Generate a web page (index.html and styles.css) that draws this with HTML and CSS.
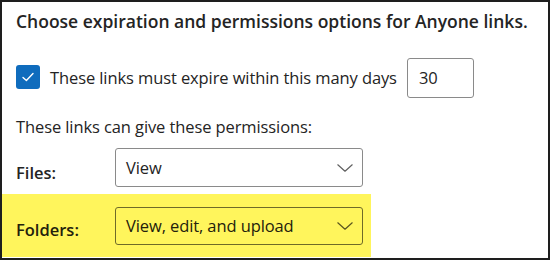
FILE: index.html
```html
<!DOCTYPE html>
<html lang="en">
<head>
<meta charset="utf-8">
<link rel="stylesheet" href="styles.css">
</head>
<body>
<div class="panel">
  <h1 class="title">Choose expiration and permissions options for Anyone links.</h1>
  <div class="expire-row">
    <span class="checkbox">
      <svg width="14" height="14" viewBox="0 0 14 14"><path d="M2 7.4 L5.4 10.6 L12 3.6" fill="none" stroke="#fff" stroke-width="1.4" stroke-linecap="round" stroke-linejoin="round"/></svg>
    </span>
    <span class="expire-text">These links must expire within this many days</span>
    <span class="days-input">30</span>
  </div>
  <p class="perm">These links can give these permissions:</p>
  <div class="field-row">
    <span class="field-label">Files:</span>
    <div class="dropdown">
      <span class="dropdown-value">View</span>
      <svg class="chevron" width="16" height="8" viewBox="0 0 16 8"><path d="M0.8 0.8 L8 7.2 L15.2 0.8" fill="none" stroke="currentColor" stroke-width="1.2" stroke-linecap="round" stroke-linejoin="round"/></svg>
    </div>
  </div>
  <div class="field-row highlight">
    <span class="field-label">Folders:</span>
    <div class="dropdown">
      <span class="dropdown-value">View, edit, and upload</span>
      <svg class="chevron" width="16" height="8" viewBox="0 0 16 8"><path d="M0.8 0.8 L8 7.2 L15.2 0.8" fill="none" stroke="currentColor" stroke-width="1.2" stroke-linecap="round" stroke-linejoin="round"/></svg>
    </div>
  </div>
</div>
</body>
</html>
```
FILE: styles.css
```css
* { box-sizing: border-box; }
html, body { margin: 0; padding: 0; background: #fff; }
body { font-family: "Open Sans", "Noto Sans", sans-serif; color: #242424; }

.panel {
  width: 550px;
  height: 260px;
  border: 2px solid #1e1e1e;
  padding-top: 7px;
  display: flex;
  flex-direction: column;
  overflow: hidden;
}

.title {
  margin: 0;
  padding-left: 14px;
  font-size: 17.5px;
  font-weight: 600;
  line-height: 24px;
  white-space: nowrap;
}

.expire-row {
  margin-top: 25px;
  padding-left: 14px;
  display: flex;
  align-items: center;
  height: 40px;
}

.checkbox {
  width: 24px;
  height: 24px;
  border-radius: 3px;
  background: #0f6cbd;
  display: flex;
  align-items: center;
  justify-content: center;
  margin-bottom: 3px;
}

.expire-text {
  margin-left: 10px;
  font-size: 16.5px;
  letter-spacing: -0.1px;
  line-height: 24px;
  white-space: nowrap;
}

.days-input {
  margin-left: 10px;
  width: 67px;
  height: 40px;
  border: 1px solid #8a8a8a;
  border-radius: 3px;
  padding-left: 11px;
  font-size: 16.5px;
  line-height: 38px;
}

.perm {
  margin: 17px 0 0;
  padding-left: 14px;
  font-size: 16.5px;
  letter-spacing: -0.1px;
  line-height: 24px;
}

.field-row {
  margin-top: 9px;
  padding-left: 14px;
  display: flex;
  align-items: flex-end;
}

.field-label {
  width: 99px;
  font-size: 16.5px;
  font-weight: 600;
  line-height: 24px;
  margin-bottom: 2px;
}

.dropdown {
  width: 248px;
  height: 39px;
  border: 1px solid #8a8a8a;
  border-radius: 3px;
  padding: 0 9px 0 10px;
  display: flex;
  align-items: center;
  justify-content: space-between;
  color: #616161;
}

.dropdown-value {
  font-size: 16.5px;
  letter-spacing: -0.1px;
  line-height: 24px;
  color: #242424;
}

.highlight {
  margin-top: 7px;
  width: 369px;
  height: 63px;
  padding-top: 13px;
  padding-bottom: 12px;
  background: #fff55c;
  align-items: flex-end;
}

.highlight .field-label { margin-bottom: 3px; color: #23210c; }
.highlight .dropdown { height: 38px; border-color: #6f6a28; color: #5b5620; }
.highlight .dropdown-value { color: #23210c; }
```
